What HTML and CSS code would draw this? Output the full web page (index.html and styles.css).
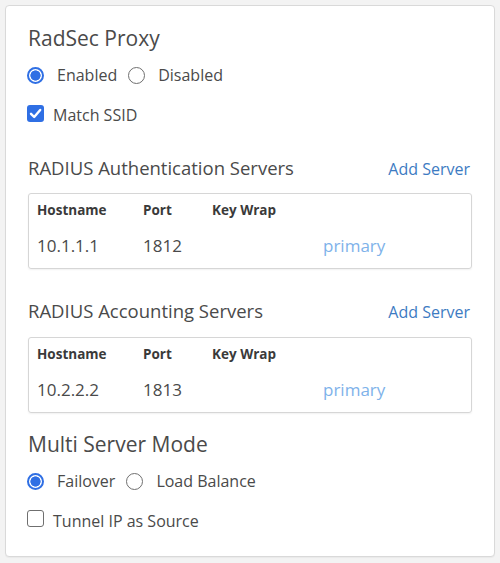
FILE: index.html
```html
<!DOCTYPE html>
<html>
<head>
<meta charset="utf-8">
<link rel="stylesheet" href="styles.css">
</head>
<body>
<div class="card">
  <h1 class="title">RadSec Proxy</h1>
  <div class="opt-row">
    <span class="radio on"></span><span class="opt-label">Enabled</span>
    <span class="radio"></span><span class="opt-label">Disabled</span>
  </div>
  <div class="check-row first">
    <span class="check on"><svg viewBox="0 0 17 17" width="17" height="17"><path d="M4 8.8 L7.2 12 L13.2 5" fill="none" stroke="#fff" stroke-width="2.4" stroke-linecap="round" stroke-linejoin="round"/></svg></span>
    <span class="check-label">Match SSID</span>
  </div>

  <div class="sec-head first-sec">
    <h2 class="sec-title">RADIUS Authentication Servers</h2>
    <span class="link">Add Server</span>
  </div>
  <div class="tbl">
    <div class="tr th"><span class="c1">Hostname</span><span class="c2">Port</span><span class="c3">Key Wrap</span><span class="c4"></span></div>
    <div class="tr td"><span class="c1">10.1.1.1</span><span class="c2">1812</span><span class="c3"></span><span class="c4 prim">primary</span></div>
  </div>

  <div class="sec-head second-sec">
    <h2 class="sec-title">RADIUS Accounting Servers</h2>
    <span class="link">Add Server</span>
  </div>
  <div class="tbl">
    <div class="tr th"><span class="c1">Hostname</span><span class="c2">Port</span><span class="c3">Key Wrap</span><span class="c4"></span></div>
    <div class="tr td"><span class="c1">10.2.2.2</span><span class="c2">1813</span><span class="c3"></span><span class="c4 prim">primary</span></div>
  </div>

  <h1 class="title multi">Multi Server Mode</h1>
  <div class="opt-row">
    <span class="radio on"></span><span class="opt-label">Failover</span>
    <span class="radio"></span><span class="opt-label">Load Balance</span>
  </div>
  <div class="check-row last">
    <span class="check"></span>
    <span class="check-label">Tunnel IP as Source</span>
  </div>
</div>
</body>
</html>
```

FILE: styles.css
```css
html, body {
  margin: 0;
  padding: 0;
}
body {
  background: #f3f3f3;
  font-family: "Open Sans", "Liberation Sans", sans-serif;
  color: #4a4a4a;
  width: 500px;
  height: 563px;
  overflow: hidden;
}
.card {
  box-sizing: border-box;
  margin: 5px 0 0 5px;
  width: 490px;
  height: 552px;
  background: #fff;
  border: 1px solid #d9d9d9;
  border-radius: 4px;
  padding: 18px 22px 0 22px;
  box-shadow: 0 1px 1px rgba(0,0,0,0.04);
}
.title {
  margin: 0;
  font-size: 21px;
  line-height: 28px;
  font-weight: 400;
  color: #4a4a4a;
}
.title.multi {
  margin-top: 17px;
}
.opt-row {
  display: flex;
  align-items: center;
  height: 20px;
  margin-top: 13px;
  font-size: 16px;
  line-height: 20px;
}
.radio {
  box-sizing: border-box;
  width: 17px;
  height: 17px;
  border-radius: 50%;
  border: 1.5px solid #6f6f6f;
  background: #fff;
  flex: none;
  margin-left: -1px;
}
.radio.on {
  border: 2px solid #2f6fe4;
  background: radial-gradient(circle, #2f6fe4 0 4.8px, #fff 5.4px);
}
.opt-label {
  margin-left: 13px;
  margin-right: 12px;
}
.check-row {
  display: flex;
  align-items: center;
  height: 20px;
  font-size: 16px;
  line-height: 20px;
}
.check-row.first { margin-top: 20px; }
.check-row.last { margin-top: 19.5px; }
.check {
  box-sizing: border-box;
  width: 17px;
  height: 17px;
  border-radius: 3px;
  border: 1.5px solid #6f6f6f;
  background: #fff;
  flex: none;
  margin-left: -1px;
  position: relative;
  top: -2px;
}
.check.on {
  border: none;
  background: #2f6fe4;
}
.check svg { display: block; }
.check-label {
  margin-left: 9px;
}
.sec-head {
  display: flex;
  justify-content: space-between;
  align-items: baseline;
  height: 24px;
}
.first-sec { margin-top: 31px; }
.second-sec { margin-top: 30px; }
.sec-title {
  margin: 0;
  font-size: 18.5px;
  line-height: 24px;
  font-weight: 400;
  color: #4a4a4a;
}
.link {
  font-size: 16px;
  line-height: 24px;
  color: #3d7bc2;
  margin-right: 2px;
}
.tbl {
  box-sizing: border-box;
  margin-top: 13px;
  height: 76px;
  border: 1px solid #d6d6d6;
  border-radius: 3px;
  padding: 7px 8px 0 8px;
  box-shadow: 0 1px 2px rgba(0,0,0,0.06);
}
.second-sec + .tbl { margin-top: 14px; }
.tr {
  display: flex;
}
.th {
  font-size: 13.5px;
  line-height: 18px;
  font-weight: 700;
  color: #3a3a3a;
}
.td {
  margin-top: 16px;
  font-size: 17px;
  line-height: 22px;
  color: #4a4a4a;
}
.c1 { width: 106px; }
.c2 { width: 69px; }
.c3 { width: 111px; }
.c4 { flex: 1; }
.prim { color: #7eb2ea; }
```
